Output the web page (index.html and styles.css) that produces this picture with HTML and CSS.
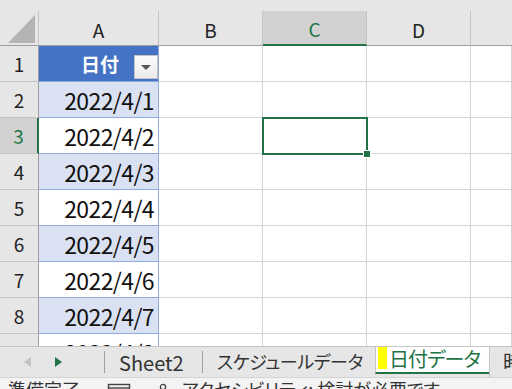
FILE: index.html
```html
<!DOCTYPE html>
<html lang="ja">
<head>
    <meta charset="UTF-8">
    <title>日付データ</title>
    <link rel="stylesheet" href="styles.css">
</head>
<body>
    <div class="top-strip"></div>
    <div class="sheet">
        <div class="hd corner"><span class="tri"></span></div>
        <div class="hd">A</div>
        <div class="hd">B</div>
        <div class="hd hd-sel">C</div>
        <div class="hd">D</div>
        <div class="hd last"></div>

        <div class="rh">1</div>
        <div class="a a-head">日付<span class="filter"><span class="arrow"></span></span></div>
        <div class="c"></div><div class="c"></div><div class="c"></div><div class="c"></div>

        <div class="rh">2</div>
        <div class="a band">2022/4/1</div>
        <div class="c"></div><div class="c"></div><div class="c"></div><div class="c"></div>

        <div class="rh rh-sel">3</div>
        <div class="a">2022/4/2</div>
        <div class="c"></div><div class="c sel"></div><div class="c"></div><div class="c"></div>

        <div class="rh">4</div>
        <div class="a band">2022/4/3</div>
        <div class="c"></div><div class="c"></div><div class="c"></div><div class="c"></div>

        <div class="rh">5</div>
        <div class="a">2022/4/4</div>
        <div class="c"></div><div class="c"></div><div class="c"></div><div class="c"></div>

        <div class="rh">6</div>
        <div class="a band">2022/4/5</div>
        <div class="c"></div><div class="c"></div><div class="c"></div><div class="c"></div>

        <div class="rh">7</div>
        <div class="a">2022/4/6</div>
        <div class="c"></div><div class="c"></div><div class="c"></div><div class="c"></div>

        <div class="rh">8</div>
        <div class="a band">2022/4/7</div>
        <div class="c"></div><div class="c"></div><div class="c"></div><div class="c"></div>

        <div class="rh">9</div>
        <div class="a">2022/4/8</div>
        <div class="c"></div><div class="c"></div><div class="c"></div><div class="c"></div>
    </div>

    <div class="tabs">
        <div class="nav">
            <span class="nav-prev"></span>
            <span class="nav-next"></span>
        </div>
        <div class="tab tab-sheet2">Sheet2</div>
        <div class="tab tab-sched">スケジュールデータ</div>
        <div class="tab tab-active"><span class="mark"></span>日付データ</div>
        <div class="tab tab-next">時</div>
    </div>

    <div class="status">
        <span class="ready">準備完了</span>
        <svg class="ico-rec" width="24" height="14" viewBox="0 0 24 14">
            <rect x="1.5" y="1.5" width="21" height="16" fill="none" stroke="#444" stroke-width="1.4"/>
            <line x1="1.5" y1="5" x2="22.5" y2="5" stroke="#444" stroke-width="1.4"/>
        </svg>
        <svg class="ico-acc" width="18" height="14" viewBox="0 0 18 14">
            <circle cx="8" cy="4" r="2.6" fill="none" stroke="#444" stroke-width="1.3"/>
            <path d="M1 8 L15 8 M8 7 L8 14" stroke="#444" stroke-width="1.3" fill="none"/>
        </svg>
        <span class="acc">アクセシビリティ: 検討が必要です</span>
    </div>
</body>
</html>
```

FILE: styles.css
```css
body {
    margin: 0;
    width: 512px;
    height: 389px;
    overflow: hidden;
    background: #fff;
    font-family: "Noto Sans CJK JP", sans-serif;
    color: #222;
}
.top-strip {
    height: 11px;
    background: #e6e6e6;
}
.sheet {
    display: grid;
    grid-template-columns: 39px 120px 104px 104px 104px 41px;
    grid-template-rows: 35px repeat(9, 36px);
    height: 335px;
    overflow: hidden;
}
.sheet > div {
    box-sizing: border-box;
}
.hd {
    background: #e6e6e6;
    border-right: 1px solid #c4c4c4;
    border-bottom: 1px solid #9e9e9e;
    display: flex;
    align-items: center;
    justify-content: center;
    font-size: 19px;
    padding-top: 2px;
}
.hd.last {
    border-right: none;
}
.hd-sel {
    background: #d2d2d2;
    color: #217346;
    border-bottom: 2px solid #217346;
}
.corner {
    position: relative;
}
.tri {
    position: absolute;
    left: 8px;
    top: 4px;
    width: 0;
    height: 0;
    border-left: 27px solid transparent;
    border-bottom: 28px solid #b4b4b4;
}
.rh {
    background: #e6e6e6;
    border-right: 1px solid #9e9e9e;
    border-bottom: 1px solid #c4c4c4;
    display: flex;
    align-items: center;
    justify-content: center;
    font-size: 19px;
}
.rh-sel {
    background: #d2d2d2;
    color: #217346;
    border-right: 2px solid #217346;
}
.c {
    border-right: 1px solid #d4d4d4;
    border-bottom: 1px solid #d4d4d4;
}
.a {
    border-right: 1px solid #8ea9db;
    border-bottom: 1px solid #8ea9db;
    display: flex;
    align-items: center;
    justify-content: flex-end;
    padding-right: 4px;
    font-size: 23px;
    letter-spacing: -0.6px;
    color: #111;
}
.band {
    background: #d9e1f2;
}
.a-head {
    background: #4472c4;
    color: #fff;
    font-weight: bold;
    font-size: 19px;
    letter-spacing: 0;
    justify-content: flex-start;
    padding-left: 42px;
    position: relative;
}
.filter {
    position: absolute;
    right: 0;
    top: 9px;
    width: 24px;
    height: 24px;
    box-sizing: border-box;
    background: linear-gradient(#fbfbfb, #ebebeb);
    border: 1px solid #c2c2c2;
    display: flex;
    align-items: center;
    justify-content: center;
}
.arrow {
    width: 0;
    height: 0;
    border-left: 5px solid transparent;
    border-right: 5px solid transparent;
    border-top: 5px solid #555;
}
.sel {
    position: relative;
}
.sel::before {
    content: "";
    position: absolute;
    left: -1px;
    top: -1px;
    right: -2px;
    bottom: -2px;
    border: 2px solid #217346;
}
.sel::after {
    content: "";
    position: absolute;
    right: -5px;
    bottom: -5px;
    width: 6px;
    height: 6px;
    background: #217346;
    border: 1px solid #fff;
}
.tabs {
    height: 30px;
    background: #e6e6e6;
    border-top: 1px solid #c4c4c4;
    display: flex;
    font-size: 20px;
    font-feature-settings: "palt";
    white-space: nowrap;
    overflow: hidden;
    color: #333;
}
.nav {
    flex: none;
    width: 105px;
    display: flex;
    align-items: center;
    padding-left: 24px;
    box-sizing: border-box;
    border-right: 1px solid #9e9e9e;
    margin: 4px 0;
}
.nav-prev {
    width: 0;
    height: 0;
    border-top: 5px solid transparent;
    border-bottom: 5px solid transparent;
    border-right: 7px solid #c4c4c4;
}
.nav-next {
    margin-left: 24px;
    width: 0;
    height: 0;
    border-top: 5px solid transparent;
    border-bottom: 5px solid transparent;
    border-left: 7px solid #217346;
}
.tab {
    flex: none;
    display: flex;
    align-items: center;
    box-sizing: border-box;
    padding: 0 0 2px 14px;
}
.tab-sheet2 {
    width: 98px;
    border-right: 1px solid #9e9e9e;
    margin: 4px 0;
    padding-bottom: 0;
}
.tab-sched {
    width: 172px;
    font-size: 18px;
    letter-spacing: -0.4px;
}
.tab-active {
    position: relative;
    width: 114px;
    height: 28px;
    margin-top: -1px;
    background: #fff;
    color: #217346;
    border-left: 1px solid #c4c4c4;
    border-bottom: 2px solid #217346;
    padding-left: 13px;
    letter-spacing: -1px;
}
.mark {
    position: absolute;
    left: 2px;
    top: -3px;
    width: 9px;
    height: 26px;
    background: #ffff00;
}
.tab-next {
    padding-left: 13px;
    border-left: 1px solid #c4c4c4;
}
.status {
    height: 12px;
    background: #f3f3f3;
    border-top: 1px solid #d4d4d4;
    display: flex;
    align-items: flex-start;
    overflow: hidden;
    font-size: 18px;
    font-feature-settings: "palt";
    white-space: nowrap;
    line-height: 24px;
    color: #333;
}
.ready {
    margin-left: 8px;
    margin-top: -1px;
}
.ico-rec {
    flex: none;
    margin-left: 27px;
    margin-top: 5px;
}
.ico-acc {
    flex: none;
    margin-left: 24px;
    margin-top: 5px;
}
.acc {
    margin-left: 9px;
    margin-top: -1px;
}
```
